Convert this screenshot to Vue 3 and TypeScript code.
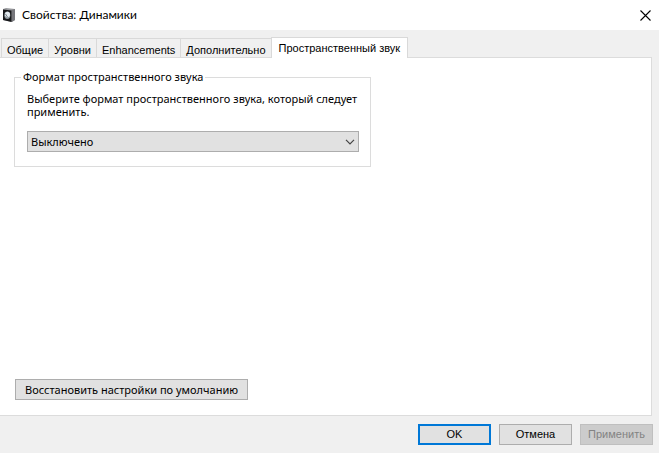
<script setup lang="ts">
import { ref } from 'vue'

const tabs: string[] = ['Общие', 'Уровни', 'Enhancements', 'Дополнительно', 'Пространственный звук']
const activeTab = ref<number>(4)
const format = ref<string>('off')
</script>

<template>
  <div class="dialog">
    <header class="titlebar">
      <svg class="app-icon" viewBox="0 0 14 16" aria-hidden="true">
        <path d="M1 2 4 1l9 1v11l-3 2-9-2z" fill="#9a9b9f" />
        <path d="M9.500 3l3.500-1v11l-3.500 2z" fill="#77777c" />
        <path d="M1 2.500l8.500 1v11.500l-8.500-2z" fill="#17181a" />
        <ellipse cx="5.300" cy="8.300" rx="3" ry="3.700" fill="#8f999f" />
        <ellipse cx="5.500" cy="7.500" rx="2.500" ry="2.700" fill="#e4ebf0" />
        <path d="M3.500 7l2 3" stroke="#747d83" />
      </svg>
      <h1>Свойства: Динамики</h1>
      <button class="close" type="button" aria-label="Закрыть">
        <svg viewBox="0 0 11 11" aria-hidden="true">
          <path d="M.5.5l10 10M10.5.5l-10 10" stroke="#000" stroke-width="1.1" />
        </svg>
      </button>
    </header>
    <main class="body">
      <div class="tabs" role="tablist">
        <button
          v-for="(tab, i) in tabs"
          :key="tab"
          type="button"
          role="tab"
          class="tab"
          :class="{ active: i === activeTab }"
          :aria-selected="i === activeTab"
          @click="activeTab = i"
        >{{ tab }}</button>
      </div>
      <section class="panel" role="tabpanel">
        <fieldset class="group">
          <legend>Формат пространственного звука</legend>
          <label for="format">Выберите формат пространственного звука, который следует применить.</label>
          <div class="combo">
            <select id="format" v-model="format">
              <option value="off">Выключено</option>
            </select>
            <svg viewBox="0 0 10 6" aria-hidden="true">
              <path d="M1 .8l4 4 4-4" fill="none" stroke="#444" stroke-width="1.2" />
            </svg>
          </div>
        </fieldset>
        <button class="button restore" type="button">Восстановить настройки по умолчанию</button>
      </section>
      <footer class="actions">
        <button class="button primary" type="button">OK</button>
        <button class="button" type="button">Отмена</button>
        <button class="button" type="button" disabled>Применить</button>
      </footer>
    </main>
  </div>
</template>

<style>
body {
  margin: 0;
}
</style>

<style scoped>
.dialog {
  box-sizing: border-box;
  display: flex;
  flex-direction: column;
  min-height: 100vh;
  background: #fff;
  color: #000;
  font-family: 'Noto Sans', 'Open Sans', sans-serif;
  font-size: 11px;
}
button,
select {
  margin: 0;
  color: inherit;
  font: inherit;
}
.titlebar {
  display: flex;
  align-items: center;
  height: 30px;
  padding-left: 2px;
}
.app-icon {
  width: 14px;
  height: 16px;
}
h1 {
  flex: 1;
  margin: 0 0 0 6px;
  font-family: Lato, 'Noto Sans', sans-serif;
  font-size: 12px;
  font-weight: 400;
  line-height: 16px;
}
.close {
  display: flex;
  align-items: center;
  justify-content: center;
  width: 28px;
  height: 28px;
  padding: 0;
  border: 0;
  background: none;
}
.close svg {
  width: 11px;
  height: 11px;
}
.body {
  flex: 1;
  display: flex;
  flex-direction: column;
  padding: 7px 7px 8px 0;
  background: #f0f0f0;
}
.tabs {
  display: flex;
  align-items: flex-end;
  padding-left: 1px;
  font-family: 'Liberation Sans', Arial, sans-serif;
}
.tab {
  height: 19px;
  margin-right: -1px;
  padding: 0 5px;
  border: 1px solid #d9d9d9;
  border-bottom: 0;
  background: #f0f0f0;
  line-height: 18px;
  white-space: nowrap;
}
.tab:not(.active) {
  padding-top: 2px;
}
.tab.active {
  position: relative;
  height: 21px;
  margin-bottom: -1px;
  padding: 0 7px;
  background: #fff;
}
.panel {
  flex: 1;
  display: flex;
  flex-direction: column;
  align-items: flex-start;
  justify-content: space-between;
  padding: 12px 14px 15px;
  border: 1px solid #dcdcdc;
  border-left: 0;
  background: #fff;
}
.group {
  box-sizing: border-box;
  width: 100%;
  max-width: 357px;
  margin: 0;
  padding: 8px 11px 14px 12px;
  border: 1px solid #dcdcdc;
}
legend {
  margin-left: -6px;
  padding: 0 2px;
  line-height: 14px;
}
label {
  display: block;
  line-height: 13px;
}
.combo {
  display: grid;
  align-items: center;
  margin-top: 13px;
}
.combo select,
.combo svg {
  grid-area: 1 / 1;
}
.combo select {
  width: 100%;
  height: 21px;
  padding: 0 24px 0 3px;
  border: 1px solid #adadad;
  border-radius: 0;
  background: #e1e1e1;
  appearance: none;
}
.combo svg {
  justify-self: end;
  width: 10px;
  height: 6px;
  margin-right: 4px;
  pointer-events: none;
}
.button {
  box-sizing: border-box;
  width: 73px;
  height: 21px;
  padding: 0;
  border: 1px solid #adadad;
  background: #e1e1e1;
  line-height: 17px;
  white-space: nowrap;
}
.restore {
  width: auto;
  margin-left: 1px;
  padding: 0 9px;
}
.actions {
  display: flex;
  justify-content: flex-end;
  gap: 8px;
  margin-right: -1px;
  padding-top: 8px;
  font-family: 'Liberation Sans', Arial, sans-serif;
}
.primary {
  border: 2px solid #0078d7;
}
.button:disabled {
  border-color: #bfbfbf;
  background: #ccc;
  color: #838383;
}
</style>
